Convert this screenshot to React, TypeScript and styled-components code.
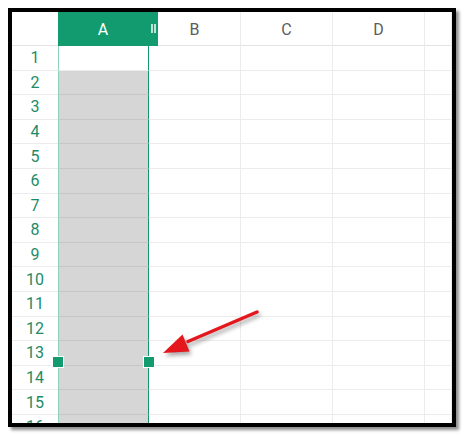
import React from 'react';
import styled, { createGlobalStyle } from 'styled-components';

// #region styled
const GlobalStyle = createGlobalStyle`
  html, body {
    margin: 0;
    background: #fff;
  }
  body {
    font-family: Roboto, "Noto Sans", sans-serif;
  }
`;

const Page = styled.div`
  box-sizing: border-box;
  width: 464px;
  height: 435px;
  padding: 8px;
`;

const Frame = styled.div`
  position: relative;
  box-sizing: border-box;
  width: 448px;
  height: 419px;
  border: 4px solid #000;
  background: #fff;
  box-shadow: 3px 3px 3px rgba(0, 0, 0, 0.45);
  overflow: hidden;
`;

const Sheet = styled.div`
  display: grid;
  grid-template-columns: 46px 91px 92px 92px 92px 1fr;
  grid-template-rows: 34px repeat(16, 24.6px);
`;

const Corner = styled.div`
  border-bottom: 1px solid #e4e4e4;
`;

const ColHeader = styled.div<{ $selected?: boolean }>`
  position: relative;
  box-sizing: border-box;
  display: flex;
  align-items: center;
  justify-content: center;
  padding-top: 1px;
  font-size: 16px;
  color: ${(p) => (p.$selected ? '#fff' : '#5c5c5c')};
  background: ${(p) => (p.$selected ? '#119b6f' : '#fff')};
  border-right: 1px solid ${(p) => (p.$selected ? '#119b6f' : '#ececec')};
  border-bottom: 1px solid ${(p) => (p.$selected ? '#119b6f' : '#e4e4e4')};
`;

const Grip = styled.span`
  position: absolute;
  z-index: 2;
  top: 0;
  bottom: -1px;
  left: 100%;
  width: 10px;
  background: #119b6f;

  &::before,
  &::after {
    content: '';
    position: absolute;
    top: 12px;
    width: 1.5px;
    height: 9px;
    background: #b9e6d5;
  }
  &::before {
    left: 3px;
  }
  &::after {
    left: 6px;
  }
`;

const RowHead = styled.div`
  box-sizing: border-box;
  display: flex;
  align-items: center;
  justify-content: center;
  font-size: 16px;
  color: #1d8b68;
  border-bottom: 1px solid #ececec;
`;

const Cell = styled.div<{ $selected?: boolean; $active?: boolean }>`
  box-sizing: border-box;
  background: ${(p) => (p.$selected && !p.$active ? '#d6d6d6' : '#fff')};
  border-right: 1px solid ${(p) => (p.$selected ? '#16956b' : '#ececec')};
  border-bottom: 1px solid
    ${(p) => (p.$selected && !p.$active ? '#c6c6c6' : '#ececec')};
  border-left: ${(p) => (p.$selected ? '1px solid #8fd1b8' : 'none')};
`;

const Handle = styled.span<{ $x: number; $y: number }>`
  position: absolute;
  z-index: 3;
  left: ${(p) => p.$x}px;
  top: ${(p) => p.$y}px;
  width: 10px;
  height: 10px;
  background: #119b6f;
  border: 1px solid #fff;
  transform: translate(-50%, -50%);
`;

const Overlay = styled.svg`
  position: absolute;
  z-index: 4;
  inset: 0;
  width: 100%;
  height: 100%;
  pointer-events: none;
  filter: drop-shadow(2px 3px 2px rgba(0, 0, 0, 0.35));
`;
// #endregion

const columns = ['A', 'B', 'C', 'D', ''];
const rows = Array.from({ length: 16 }, (_, i) => i + 1);

const App: React.FC = () => {
  return (
    <Page>
      <GlobalStyle />
      <Frame>
        <Sheet>
          <Corner />
          {columns.map((c) => (
            <ColHeader key={`h-${c}`} $selected={c === 'A'}>
              {c}
              {c === 'A' && <Grip />}
            </ColHeader>
          ))}
          {rows.map((r) => (
            <React.Fragment key={r}>
              <RowHead>{r}</RowHead>
              {columns.map((c, i) => (
                <Cell
                  key={`${r}-${i}`}
                  $selected={c === 'A'}
                  $active={c === 'A' && r === 1}
                />
              ))}
            </React.Fragment>
          ))}
        </Sheet>
        <Handle $x={46} $y={350} />
        <Handle $x={137} $y={350} />
        <Overlay viewBox="0 0 440 411">
          <path
            d="M245 300 L176 329.5"
            stroke="#e3171c"
            strokeWidth={3.5}
            strokeLinecap="round"
          />
          <polygon points="151,341 170.5,322.5 177.5,339.5" fill="#e3171c" />
        </Overlay>
      </Frame>
    </Page>
  );
};

export default App;
